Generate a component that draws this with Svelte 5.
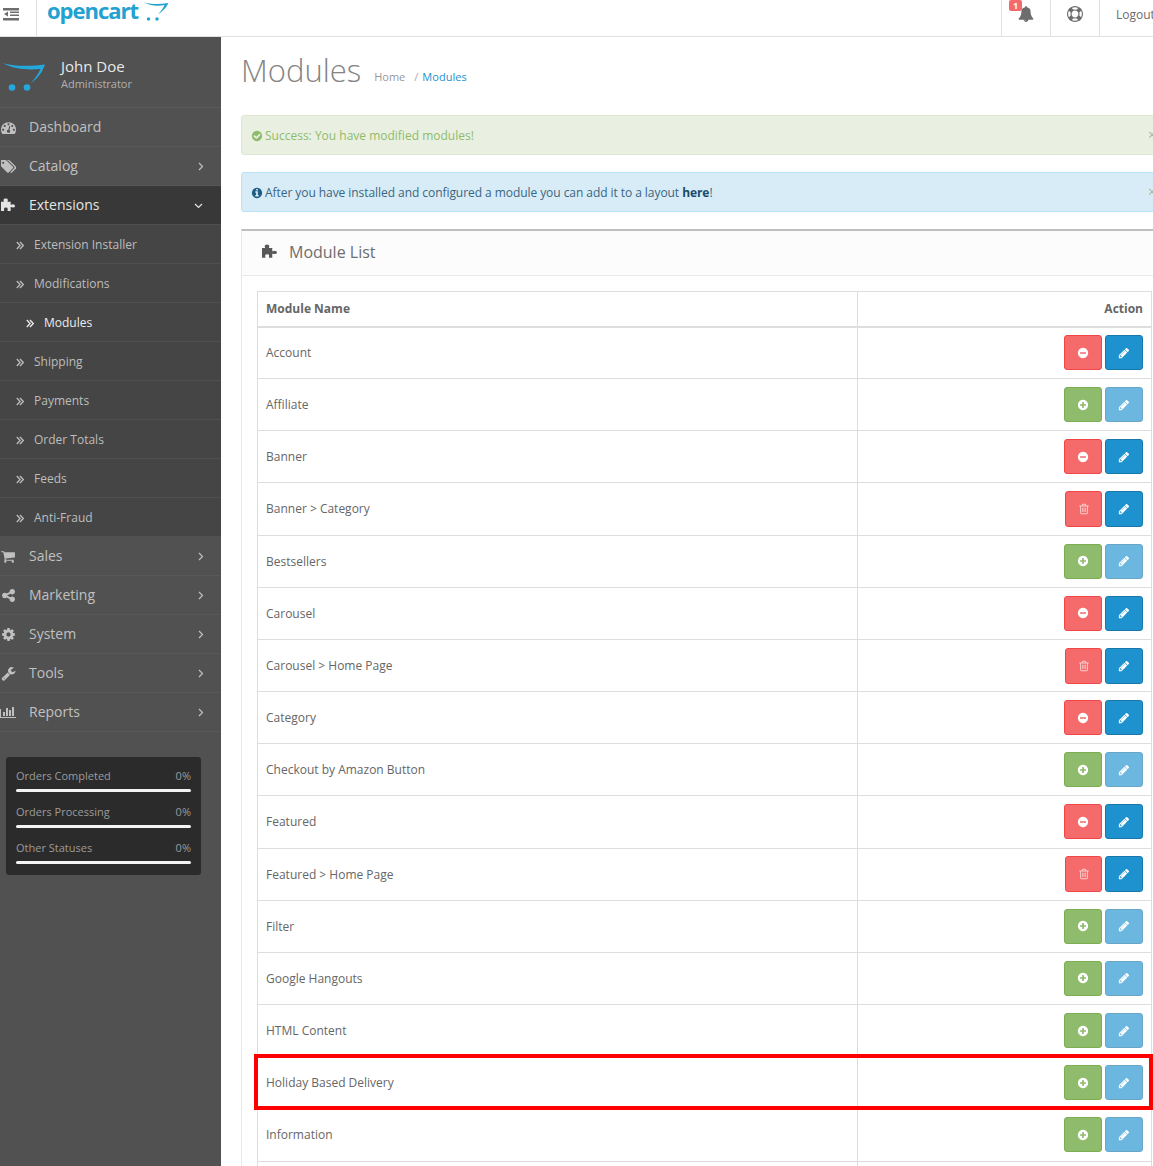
<script>
  const circle = 'q0 209-103 385.5t-279.5 279.5-385.5 103-385.5-103-279.5-279.5-103-385.5 103-385.5 279.5-279.5 385.5-103 385.5 103 279.5 279.5 103 385.5z';
  const P = {
    pencil: 'M491 1536l91-91-235-235-91 91v107h128v128h107zm523-928q0-22-22-22-10 0-17 7l-542 542q-7 7-7 17 0 22 22 22 10 0 17-7l542-542q7-7 7-17zm-54-192l416 416-832 832h-416v-416zm683 96q0 53-37 90l-166 166-416-416 166-165q36-38 90-38 53 0 91 38l235 234q37 39 37 91z',
    plus: 'M1344 960v-128q0-26-19-45t-45-19h-256v-256q0-26-19-45t-45-19h-128q-26 0-45 19t-19 45v256h-256q-26 0-45 19t-19 45v128q0 26 19 45t45 19h256v256q0 26 19 45t45 19h128q26 0 45-19t19-45v-256h256q26 0 45-19t19-45zm320-64' + circle,
    minus: 'M1344 960v-128q0-26-19-45t-45-19h-768q-26 0-45 19t-19 45v128q0 26 19 45t45 19h768q26 0 45-19t19-45zm320-64' + circle,
    check: 'M1412 734q0-28-18-46l-91-90q-19-19-45-19t-45 19l-408 407-226-226q-19-19-45-19t-45 19l-91 90q-18 18-18 46 0 27 18 45l362 362q19 19 45 19 27 0 46-19l543-543q18-18 18-45zm252 162' + circle,
    info: 'M1152 1376v-160q0-14-9-23t-23-9h-96v-512q0-14-9-23t-23-9h-320q-14 0-23 9t-9 23v160q0 14 9 23t23 9h96v320h-96q-14 0-23 9t-9 23v160q0 14 9 23t23 9h448q14 0 23-9t9-23zm-128-896v-160q0-14-9-23t-23-9h-192q-14 0-23 9t-9 23v160q0 14 9 23t23 9h192q14 0 23-9t9-23zm640 416' + circle,
    trash: 'M704 736v576q0 14-9 23t-23 9h-64q-14 0-23-9t-9-23v-576q0-14 9-23t23-9h64q14 0 23 9t9 23zm256 0v576q0 14-9 23t-23 9h-64q-14 0-23-9t-9-23v-576q0-14 9-23t23-9h64q14 0 23 9t9 23zm256 0v576q0 14-9 23t-23 9h-64q-14 0-23-9t-9-23v-576q0-14 9-23t23-9h64q14 0 23 9t9 23zm128 724v-948h-896v948q0 22 7 40.5t14.5 27 10.5 8.5h832q3 0 10.5-8.5t14.5-27 7-40.5zm-672-1076h448l-48-117q-7-9-17-11h-317q-10 2-17 11zm928 32v64q0 14-9 23t-23 9h-96v948q0 83-47 143.5t-113 60.5h-832q-66 0-113-58.5t-47-141.5v-952h-96q-14 0-23-9t-9-23v-64q0-14 9-23t23-9h309l70-167q15-37 54-63t79-26h320q40 0 79 26t54 63l70 167h309q14 0 23 9t9 23z',
    bell: 'M912 1696q0-16-16-16-59 0-101.5-42.5t-42.5-101.5q0-16-16-16t-16 16q0 73 51.5 124.5t124.5 51.5q16 0 16-16zm816-288q0 52-38 90t-90 38h-448q0 106-75 181t-181 75-181-75-75-181h-448q-52 0-90-38t-38-90q50-42 91-88t85-119.5 74.5-158.5 50-206 19.5-260q0-152 117-282.5t307-158.5q-8-19-8-39 0-40 28-68t68-28 68 28 28 68q0 20-8 39 190 28 307 158.5t117 282.5q0 139 19.5 260t50 206 74.5 158.5 85 119.5 91 88z',
    ring: 'M896 0q182 0 348 71t286 191 191 286 71 348-71 348-191 286-286 191-348 71-348-71-286-191-191-286-71-348 71-348 191-286 286-191 348-71zm0 128q-190 0-361 90l194 194q82-28 167-28t167 28l194-194q-171-90-361-90zm-678 1129l194-194q-28-82-28-167t28-167l-194-194q-90 171-90 361t90 361zm678 407q190 0 361-90l-194-194q-82 28-167 28t-167-28l-194 194q171 90 361 90zm0-384q159 0 271.5-112.5t112.5-271.5-112.5-271.5-271.5-112.5-271.5 112.5-112.5 271.5 112.5 271.5 271.5 112.5zm484-217l194 194q90-171 90-361t-90-361l-194 194q28 82 28 167t-28 167z',
    puzzle: 'M0 450H340V400Q300 330 300 230Q300 60 560 60Q820 60 820 230Q820 330 780 400V450H1150V800H1200Q1280 760 1400 760Q1680 760 1680 950Q1680 1130 1400 1130Q1280 1130 1200 1090H1150V1550H780V1480Q800 1400 800 1300Q800 1140 580 1140Q360 1140 360 1300Q360 1400 380 1480V1550H0Z',
    dash: 'M384 1152q0-53-37.5-90.5t-90.5-37.5-90.5 37.5-37.5 90.5 37.5 90.5 90.5 37.5 90.5-37.5 37.5-90.5zm192-448q0-53-37.5-90.5t-90.5-37.5-90.5 37.5-37.5 90.5 37.5 90.5 90.5 37.5 90.5-37.5 37.5-90.5zm428 481l101-382q6-26-7.5-48.5t-38.5-29.5-48 6.5-30 39.5l-101 382q-60 5-107 43.5t-63 98.5q-20 77 20 146t117 89 146-20 89-117q16-60-6-117t-72-91zm660-33q0-53-37.5-90.5t-90.5-37.5-90.5 37.5-37.5 90.5 37.5 90.5 90.5 37.5 90.5-37.5 37.5-90.5zm-640-640q0-53-37.5-90.5t-90.5-37.5-90.5 37.5-37.5 90.5 37.5 90.5 90.5 37.5 90.5-37.5 37.5-90.5zm448 192q0-53-37.5-90.5t-90.5-37.5-90.5 37.5-37.5 90.5 37.5 90.5 90.5 37.5 90.5-37.5 37.5-90.5zm320 448q0 261-141 483-19 29-54 29h-1402q-35 0-54-29-141-221-141-483 0-182 71-348t191-286 286-191 348-71 348 71 286 191 191 286 71 348z',
    tags: 'M384 448q0-53-37.5-90.5t-90.5-37.5-90.5 37.5-37.5 90.5 37.5 90.5 90.5 37.5 90.5-37.5 37.5-90.5zm1067 576q0 53-37 90l-491 492q-39 37-91 37-53 0-90-37l-715-716q-38-37-64.5-101t-26.5-117v-416q0-52 38-90t90-38h416q53 0 117 26.5t102 64.5l715 714q37 39 37 91zm384 0q0 53-37 90l-491 492q-39 37-91 37-36 0-59-14t-53-45l470-470q37-37 37-90 0-52-37-91l-715-714q-38-38-102-64.5t-117-26.5h224q53 0 117 26.5t102 64.5l715 714q37 39 37 91z',
    cart: 'M640 1536q0 52-38 90t-90 38-90-38-38-90 38-90 90-38 90 38 38 90zm896 0q0 52-38 90t-90 38-90-38-38-90 38-90 90-38 90 38 38 90zm128-1088v512q0 24-16.5 42.5t-40.5 21.5l-1044 122q13 60 13 70 0 16-24 64h920q26 0 45 19t19 45-19 45-45 19h-1024q-26 0-45-19t-19-45q0-11 8-31.5t16-36 21.5-40 15.5-29.5l-177-823h-204q-26 0-45-19t-19-45 19-45 45-19h256q16 0 28.5 6.5t19.5 15.5 13 24.5 8 26 5.5 29.5 4.5 26h1201q26 0 45 19t19 45z',
    share: 'M1344 1024q133 0 226.5 93.5t93.5 226.5-93.5 226.5-226.5 93.5-226.5-93.5-93.5-226.5q0-12 2-34l-360-180q-92 86-218 86-133 0-226.5-93.5t-93.5-226.5 93.5-226.5 226.5-93.5q126 0 218 86l360-180q-2-22-2-34 0-133 93.5-226.5t226.5-93.5 226.5 93.5 93.5 226.5-93.5 226.5-226.5 93.5q-126 0-218-86l-360 180q2 22 2 34t-2 34l360 180q92-86 218-86z',
    cog: 'M1152 896q0-106-75-181t-181-75-181 75-75 181 75 181 181 75 181-75 75-181zm512-109v222q0 12-8 23t-20 13l-185 28q-19 54-39 91 35 50 107 138 10 12 10 25t-9 23q-27 37-99 108t-94 71q-12 0-26-9l-138-108q-44 23-91 38-16 136-29 186-7 28-36 28h-222q-14 0-24.5-8.5t-11.5-21.5l-28-184q-49-16-90-37l-141 107q-10 9-25 9-14 0-25-11-126-114-165-168-7-10-7-23 0-12 8-23 15-21 51-66.5t54-70.5q-27-50-41-99l-183-27q-13-2-21-12.5t-8-23.5v-222q0-12 8-23t19-13l186-28q14-46 39-92-40-57-107-138-10-12-10-24 0-10 9-23 26-36 98.5-107.5t94.5-71.5q13 0 26 10l138 107q44-23 91-38 16-136 29-186 7-28 36-28h222q14 0 24.5 8.5t11.5 21.5l28 184q49 16 90 37l142-107q9-9 24-9 13 0 25 10 129 119 165 170 7 8 7 22 0 12-8 23-15 21-51 66.5t-54 70.5q26 50 41 98l183 28q13 2 21 12.5t8 23.5z',
    wrench: 'M448 1472q0-26-19-45t-45-19-45 19-19 45 19 45 45 19 45-19 19-45zm644-420l-682 682q-37 37-90 37-52 0-91-37l-106-108q-38-36-38-90 0-53 38-91l681-681q39 98 114.5 173.5t173.5 114.5zm634-435q0 39-23 106-47 134-164.5 217.5t-258.5 83.5q-185 0-316.5-131.5t-131.5-316.5 131.5-316.5 316.5-131.5q58 0 121.5 16.5t107.5 46.5q16 11 16 28t-16 28l-293 169v224l193 107q5-3 79-48.5t135.5-81 70.5-35.5q15 0 23.5 10t8.5 25z',
    chart: 'M640 896v512h-256v-512h256zm384-512v1024h-256v-1024h256zm1024 1152v128h-2048v-1152h128v1024h1920zm-640-896v768h-256v-768h256zm384-384v1152h-256v-1152h256z'
  };

  const top1 = [
    { name: 'Dashboard', icon: 'dash' },
    { name: 'Catalog', icon: 'tags', arrow: true }
  ];
  const subs = ['Extension Installer', 'Modifications', 'Modules', 'Shipping', 'Payments', 'Order Totals', 'Feeds', 'Anti-Fraud'];
  const top2 = [
    { name: 'Sales', icon: 'cart', arrow: true },
    { name: 'Marketing', icon: 'share', arrow: true },
    { name: 'System', icon: 'cog', arrow: true },
    { name: 'Tools', icon: 'wrench', arrow: true },
    { name: 'Reports', icon: 'chart', arrow: true, wide: true }
  ];
  const stats = ['Orders Completed', 'Orders Processing', 'Other Statuses'];
  const rows = [
    ['Account', 'off'], ['Affiliate', 'on'], ['Banner', 'off'], ['Banner > Category', 'del'],
    ['Bestsellers', 'on'], ['Carousel', 'off'], ['Carousel > Home Page', 'del'], ['Category', 'off'],
    ['Checkout by Amazon Button', 'on'], ['Featured', 'off'], ['Featured > Home Page', 'del'], ['Filter', 'on'],
    ['Google Hangouts', 'on'], ['HTML Content', 'on'], ['Holiday Based Delivery', 'on'], ['Information', 'on'], ['Latest', 'on']
  ];
</script>

{#snippet fa(name, cls = '', vb = '0 0 1792 1792')}
  <svg class="fa {cls}" viewBox={vb} aria-hidden="true"><path d={P[name]} /></svg>
{/snippet}

<div class="page">
  <header class="top">
    <button class="toggle" aria-label="Toggle menu">
      <svg width="16" height="13" viewBox="0 0 16 13"><path d="M0 0h16v2.500H0zM7 3.500h9V5H7zM7 6.500h9V8H7zM0 10h16v2.500H0zM5 3.500v5L1 6z" /></svg>
    </button>
    <div class="brand">
      <span class="logotext">opencart</span>
      <svg class="logocart" width="26" height="22" viewBox="0 0 26 22">
        <path d="M0 2C7 4.500 16 4.500 25.500 3 23.500 7.500 19.500 11.500 15 14.500c3-3.500 5-6 6.500-9.500C14 6.500 6 5.500 0 2z" fill="#23a1d1" />
        <circle cx="5.500" cy="19" r="1.700" fill="#23a1d1" /><circle cx="14" cy="19" r="1.700" fill="#23a1d1" />
      </svg>
    </div>
    <nav class="topright">
      <div class="tool bell">
        <span class="badge">1</span>
        {@render fa('bell', 'bellicon')}
      </div>
      <div class="tool">{@render fa('ring', 'ringicon')}</div>
      <div class="tool logout">Logout</div>
    </nav>
  </header>

  <div class="shell">
    <aside class="side">
      <div class="profile">
        <svg class="avatar" width="44" height="30" viewBox="0 0 44 30">
          <path d="M0 2c10 3.500 28 3.500 42 1.500-3 8-7 14-14 18.500 4-5 7.500-9 9.500-14C26 9 10 8.500 0 2z" fill="#23a7dd" />
          <circle cx="9" cy="26.500" r="3.300" fill="#23a7dd" /><circle cx="24" cy="26.500" r="3.300" fill="#23a7dd" />
        </svg>
        <div>
          <div class="pname">John Doe</div>
          <div class="prole">Administrator</div>
        </div>
      </div>
      <ul class="menu">
        {#each top1 as m}
          <li class="item">
            <span class="ic">{@render fa(m.icon)}</span><span class="lbl">{m.name}</span>
            {#if m.arrow}<svg class="chev" width="6" height="9" viewBox="0 0 6 9"><path d="M1 1l3.500 3.500L1 8" /></svg>{/if}
          </li>
        {/each}
        <li class="item active">
          <span class="ic">{@render fa('puzzle')}</span><span class="lbl">Extensions</span>
          <svg class="chev down" width="9" height="6" viewBox="0 0 9 6"><path d="M1 1l3.500 3.500L8 1" /></svg>
        </li>
        {#each subs as s}
          <li class="sub" class:current={s === 'Modules'}>
            <svg class="dbl" width="8" height="9" viewBox="0 0 8 9"><path d="M.8 1l3.300 3.500L.8 8M4 1l3.300 3.500L4 8" /></svg>{s}
          </li>
        {/each}
        {#each top2 as m}
          <li class="item">
            <span class="ic">{#if m.wide}{@render fa(m.icon, 'wide', '0 0 2048 1792')}{:else}{@render fa(m.icon)}{/if}</span><span class="lbl">{m.name}</span>
            <svg class="chev" width="6" height="9" viewBox="0 0 6 9"><path d="M1 1l3.500 3.500L1 8" /></svg>
          </li>
        {/each}
      </ul>
      <div class="stats">
        {#each stats as s}
          <div class="stat">
            <div class="statrow"><span>{s}</span><span>0%</span></div>
            <div class="bar"></div>
          </div>
        {/each}
      </div>
    </aside>

    <main class="content">
      <div class="pagehead">
        <h1>Modules</h1>
        <ul class="crumbs">
          <li>Home</li>
          <li class="sep">/</li>
          <li class="now">Modules</li>
        </ul>
      </div>

      <div class="alert ok">
        {@render fa('check', 'alerticon')}<span>Success: You have modified modules!</span>
        <span class="close">×</span>
      </div>
      <div class="alert inf">
        {@render fa('info', 'alerticon')}<span class="inftext">After you have installed and configured a module you can add it to a layout <b>here</b>!</span>
        <span class="close">×</span>
      </div>

      <section class="panel">
        <div class="phead">
          {@render fa('puzzle', 'phicon')}
          <h3>Module List</h3>
        </div>
        <div class="pbody">
          <table>
            <thead>
              <tr><th class="c1">Module Name</th><th class="c2">Action</th></tr>
            </thead>
            <tbody>
              {#each rows as [name, state]}
                <tr>
                  <td class="c1">{name}</td>
                  <td class="c2">
                    <div class="acts">
                      {#if state === 'on'}
                        <span class="btn green">{@render fa('plus')}</span>
                        <span class="btn blue dim">{@render fa('pencil')}</span>
                      {:else if state === 'off'}
                        <span class="btn red">{@render fa('minus')}</span>
                        <span class="btn blue">{@render fa('pencil')}</span>
                      {:else}
                        <span class="btn red del">{@render fa('trash')}</span>
                        <span class="btn blue tall">{@render fa('pencil')}</span>
                      {/if}
                    </div>
                  </td>
                </tr>
              {/each}
            </tbody>
          </table>
        </div>
      </section>
    </main>
  </div>

  <div class="highlight"></div>
</div>

<style>
  :global(body) { margin: 0; background: #fff; }
  .page {
    position: relative; width: 1153px; height: 1166px; overflow: hidden;
    font: 12px/1.42857 "Open Sans", sans-serif; color: #666;
  }
  .fa { width: 14px; height: 14px; fill: currentColor; display: block; flex: none; }

  .top { display: flex; height: 37px; box-sizing: border-box; border-bottom: 1px solid #e1e1e1; background: #fff; align-items: stretch; overflow: hidden; }
  .toggle {
    width: 37px; border: 0; border-right: 1px solid #e1e1e1; background: none; padding: 0;
    display: flex; align-items: flex-start; justify-content: flex-start; flex: none; fill: #6d6d6d;
  }
  .toggle svg { margin: 8px 0 0 3px; }
  .brand { display: flex; padding-left: 10px; position: relative; }
  .logotext {
    font: 700 22px/24px "Open Sans", sans-serif; color: #23a1d1; letter-spacing: -1px; margin-top: -2px;
  }
  .logocart { margin-left: 5px; margin-top: 0; }
  .topright { margin-left: auto; display: flex; }
  .tool {
    width: 48px; border-left: 1px solid #e1e1e1; display: flex; align-items: flex-start; justify-content: center; color: #6d6d6d; position: relative;
  }
  .logout { width: 54px; justify-content: flex-start; padding: 6px 0 0 16px; box-sizing: border-box; font-size: 12px; white-space: nowrap; flex: none; }
  .bellicon { width: 16px; height: 16px; margin-top: 6px; }
  .ringicon { width: 16px; height: 16px; margin-top: 6px; }
  .badge {
    position: absolute; left: 7px; top: 0; width: 13px; height: 11px; border-radius: 2px;
    background: #f56b6b; color: #fff; font-size: 9px; font-weight: 700; line-height: 11px; text-align: center;
  }

  .shell { display: flex; align-items: flex-start; }
  .side { width: 221px; height: 1129px; flex: none; background: #515151; }
  .profile {
    display: flex; height: 71px; box-sizing: border-box; border-bottom: 1px solid #5a5a5a; align-items: flex-start;
    padding: 19px 0 0 3px;
  }
  .avatar { margin-right: 14px; margin-top: 5px; }
  .pname { font-size: 15px; line-height: 20px; color: #e9e9e9; }
  .prole { font-size: 11px; line-height: 14px; color: #b0b0b0; margin-top: 1px; }
  .menu { list-style: none; margin: 0; padding: 0; }
  .item {
    display: flex; align-items: center; height: 39px; box-sizing: border-box; border-bottom: 1px solid #585858;
    font-size: 14px; color: #c0c0c0; position: relative; white-space: nowrap;
  }
  .ic { width: 29px; flex: none; padding-left: 1px; box-sizing: border-box; }
  .ic .fa { width: 15px; height: 15px; }
  .ic .wide { width: 16px; height: 14px; margin-left: -1px; }
  .chev { position: absolute; right: 17px; top: 15px; fill: none; stroke: currentColor; stroke-width: 1.2; }
  .chev.down { right: 18px; top: 17px; }
  .item.active { background: #383838; color: #e4e4e4; border-bottom-color: #4f4f4f; }
  .sub {
    display: flex; align-items: center; height: 39px; box-sizing: border-box; background: #454545;
    border-bottom: 1px solid #505050; padding: 2px 0 0 16px; color: #bdbdbd; white-space: nowrap;
  }
  .sub.current { padding-left: 26px; color: #ececec; }
  .dbl { margin-right: 10px; fill: none; stroke: currentColor; stroke-width: 1.3; }
  .stats {
    margin: 25px 0 0 6px; width: 195px; height: 118px; box-sizing: border-box; background: #2b2b2b; border-radius: 3px; padding: 10px 10px 0;
    color: #9b9b9b; font-size: 11px;
  }
  .stat { height: 36px; box-sizing: border-box; }
  .statrow { display: flex; justify-content: space-between; line-height: 18px; height: 18px; }
  .bar { height: 3px; border-radius: 2px; background: #f3f3f3; margin-top: 4px; }

  .content { width: 932px; flex: none; padding-left: 20px; box-sizing: border-box; }
  .pagehead { display: flex; align-items: flex-start; height: 78px; padding-top: 11px; box-sizing: border-box; }
  h1 { margin: 0; font-size: 31px; font-weight: 300; line-height: 44px; color: #848484; }
  .crumbs { display: flex; list-style: none; margin: 21px 0 0 13px; padding: 0; font-size: 11px; color: #999; }
  .sep { margin: 0 4px 0 9px; color: #aaa; }
  .now { color: #1e91cf; letter-spacing: 0.05px; }

  .alert {
    display: flex; align-items: center; height: 40px; box-sizing: border-box; border: 1px solid; border-radius: 3px;
    padding: 1px 0 0 9px; margin-bottom: 17px; position: relative; width: 940px; white-space: pre;
  }
  .alerticon { width: 12px; height: 12px; margin-right: 2px; }
  .ok { background: #e9f0e1; border-color: #dfe8d3; color: #8fbb6c; }
  .inf { background: #d8ecf7; border-color: #b7e3f5; color: #3a6680; }
  .inftext { letter-spacing: -0.06px; }
  .inf .alerticon { color: #1f5d85; }
  .inf b { color: #1a4a6a; font-weight: 700; }
  .close { position: absolute; left: 906px; top: 10px; color: #a8b3a8; font-size: 14px; line-height: 18px; }

  .panel {
    border: 1px solid #e8e8e8; border-top: 2px solid #bfbfbf; width: 940px; box-sizing: border-box; background: #fff;
  }
  .phead {
    display: flex; align-items: center; height: 45px; box-sizing: border-box; background: #fcfcfc; border-bottom: 1px solid #e8e8e8; padding: 0 0 2px 20px; color: #595959;
  }
  .phicon { width: 16px; height: 16px; margin-right: 11px; }
  h3 { margin: 0; font-size: 16px; font-weight: 400; color: #6e6e6e; }
  .pbody { padding: 15px; }
  table { border-collapse: collapse; width: 895px; table-layout: fixed; }
  th, td { border: 1px solid #ddd; padding: 0 8px; color: #666; box-sizing: border-box; }
  th { height: 35px; border-bottom-width: 2px; font-weight: 700; }
  td { height: 52.167px; }
  .c1 { text-align: left; width: 600px; }
  .c2 { text-align: right; }
  .acts { display: flex; justify-content: flex-end; gap: 3px; }
  .btn {
    width: 38px; height: 35px; box-sizing: border-box; border: 1px solid; border-radius: 3px; display: flex; align-items: center; justify-content: center; color: #fff;
  }
  .btn .fa { width: 12px; height: 12px; }
  .green { background: #8fbb6c; border-color: #7aae50; }
  .red { background: #f56b6b; border-color: #f24545; }
  .blue { background: #1e91cf; border-color: #1978ab; }
  .dim { opacity: 0.65; }
  .del { width: 37px; height: 36px; }
  .tall { height: 36px; }
  .del .fa { color: #fbd0d0; }
  .highlight {
    position: absolute; left: 254px; top: 1054px; width: 899px; height: 56px; box-sizing: border-box; border: 4px solid #f00;
  }
</style>
